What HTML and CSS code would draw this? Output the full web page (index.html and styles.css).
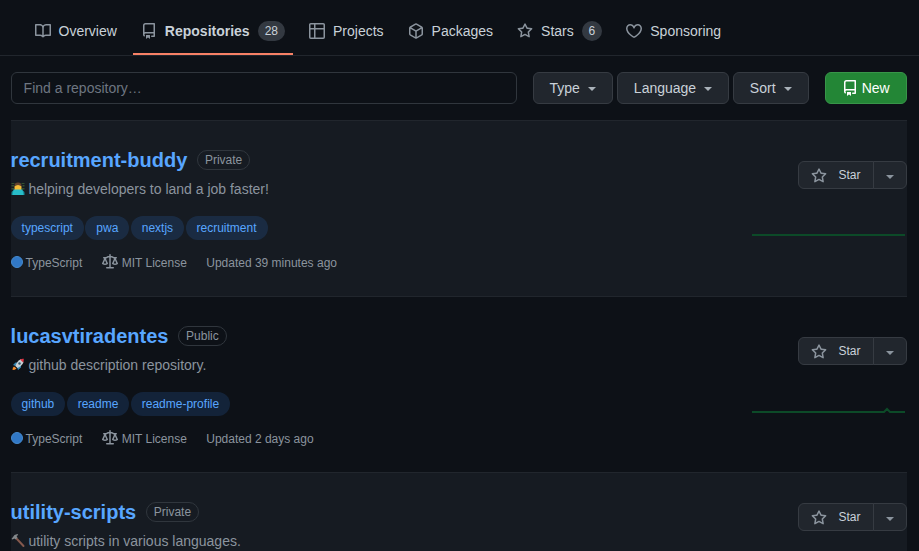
FILE: index.html
```html
<!DOCTYPE html>
<html lang="en">
<head>
<meta charset="utf-8">
<title>Repositories</title>
<link rel="stylesheet" href="styles.css">
</head>
<body>
<svg class="defs" aria-hidden="true">
  <symbol id="book" viewBox="0 0 16 16"><path fill-rule="evenodd" d="M0 1.75A.75.75 0 01.75 1h4.253c1.227 0 2.317.59 3 1.501A3.744 3.744 0 0111.006 1h4.245a.75.75 0 01.75.75v10.5a.75.75 0 01-.75.75h-4.507a2.25 2.25 0 00-1.591.659l-.622.621a.75.75 0 01-1.06 0l-.622-.621A2.25 2.25 0 005.258 13H.75a.75.75 0 01-.75-.75V1.75zm8.755 3a2.25 2.25 0 012.25-2.25H14.5v9h-3.757c-.71 0-1.4.201-1.992.572l.004-7.322zm-1.504 7.324l.004-5.073-.002-2.253A2.25 2.25 0 005.003 2.5H1.5v9h3.757a3.75 3.75 0 011.994.574z"/></symbol>
  <symbol id="repo" viewBox="0 0 16 16"><path fill-rule="evenodd" d="M2 2.5A2.5 2.5 0 014.5 0h8.75a.75.75 0 01.75.75v12.5a.75.75 0 01-.75.75h-2.5a.75.75 0 110-1.5h1.75v-2h-8a1 1 0 00-.714 1.7.75.75 0 01-1.072 1.05A2.495 2.495 0 012 11.5v-9zm10.5-1V9h-8c-.356 0-.694.074-1 .208V2.5a1 1 0 011-1h8zM5 12.25v3.25a.25.25 0 00.4.2l1.45-1.087a.25.25 0 01.3 0L8.6 15.7a.25.25 0 00.4-.2v-3.25a.25.25 0 00-.25-.25h-3.5a.25.25 0 00-.25.25z"/></symbol>
  <symbol id="table" viewBox="0 0 16 16"><path fill-rule="evenodd" d="M0 1.75C0 .784.784 0 1.75 0h12.5C15.216 0 16 .784 16 1.75v12.5A1.75 1.75 0 0114.25 16H1.75A1.75 1.75 0 010 14.25V1.75zM1.5 6.5v7.75c0 .138.112.25.25.25H5v-8H1.5zM5 5H1.5V1.75a.25.25 0 01.25-.25H5V5zm1.5 1.5v8h7.75a.25.25 0 00.25-.25V6.5h-8zm8-1.5h-8V1.5h7.75a.25.25 0 01.25.25V5z"/></symbol>
  <symbol id="package" viewBox="0 0 16 16"><path fill-rule="evenodd" d="M8.878.392a1.75 1.75 0 00-1.756 0l-5.25 3.045A1.75 1.75 0 001 4.951v6.098c0 .624.332 1.2.872 1.514l5.25 3.045a1.75 1.75 0 001.756 0l5.25-3.045c.54-.313.872-.89.872-1.514V4.951c0-.624-.332-1.2-.872-1.514L8.878.392zM7.875 1.69a.25.25 0 01.25 0l4.63 2.685L8 7.133 3.245 4.375l4.63-2.685zM2.5 5.677v5.372c0 .09.047.171.125.216l4.625 2.683V8.432L2.5 5.677zm6.25 8.271l4.625-2.683a.25.25 0 00.125-.216V5.677L8.75 8.432v5.516z"/></symbol>
  <symbol id="star" viewBox="0 0 16 16"><path fill-rule="evenodd" d="M8 .25a.75.75 0 01.673.418l1.882 3.815 4.21.612a.75.75 0 01.416 1.279l-3.046 2.97.719 4.192a.75.75 0 01-1.088.791L8 12.347l-3.766 1.98a.75.75 0 01-1.088-.79l.72-4.194L.818 6.374a.75.75 0 01.416-1.28l4.21-.611L7.327.668A.75.75 0 018 .25zm0 2.445L6.615 5.5a.75.75 0 01-.564.41l-3.097.45 2.24 2.184a.75.75 0 01.216.664l-.528 3.084 2.769-1.456a.75.75 0 01.698 0l2.77 1.456-.53-3.084a.75.75 0 01.216-.664l2.24-2.183-3.096-.45a.75.75 0 01-.564-.41L8 2.694z"/></symbol>
  <symbol id="heart" viewBox="0 0 16 16"><path fill-rule="evenodd" d="M4.25 2.5c-1.336 0-2.75 1.164-2.75 3 0 2.15 1.58 4.144 3.365 5.682A20.565 20.565 0 008 13.393a20.561 20.561 0 003.135-2.211C12.92 9.644 14.5 7.65 14.5 5.5c0-1.836-1.414-3-2.75-3-1.373 0-2.609.986-3.029 2.456a.75.75 0 01-1.442 0C6.859 3.486 5.623 2.5 4.25 2.5zM8 14.25l-.345.666-.002-.001-.006-.003-.018-.01a7.643 7.643 0 01-.31-.17 22.075 22.075 0 01-3.434-2.414C2.045 10.731 0 8.35 0 5.5 0 2.836 2.086 1 4.25 1 5.797 1 7.153 1.802 8 3.02 8.847 1.802 10.203 1 11.75 1 13.914 1 16 2.836 16 5.5c0 2.85-2.045 5.231-3.885 6.818a22.08 22.08 0 01-3.744 2.584l-.018.01-.006.003h-.002L8 14.25z"/></symbol>
  <symbol id="law" viewBox="0 0 16 16"><path fill-rule="evenodd" d="M8.75.75a.75.75 0 00-1.5 0V2h-.984c-.305 0-.604.08-.869.23l-1.288.737A.25.25 0 013.984 3H1.75a.75.75 0 000 1.5h.428L.066 9.192a.75.75 0 00.154.838l.53-.53-.53.53v.001l.002.002.002.002.006.006.016.015.045.04a3.514 3.514 0 00.686.45A4.492 4.492 0 003 11c.88 0 1.556-.22 2.023-.454a3.515 3.515 0 00.686-.45l.045-.04.016-.015.006-.006.002-.002.001-.002L5.25 9.5l.53.53a.75.75 0 00.154-.838L3.822 4.5h.162c.305 0 .604-.08.869-.23l1.289-.737a.25.25 0 01.124-.033h.984V13h-2.5a.75.75 0 000 1.5h6.5a.75.75 0 000-1.5h-2.5V3.5h.984a.25.25 0 01.124.033l1.29.736c.264.152.563.231.868.231h.162l-2.112 4.692a.75.75 0 00.154.838l.53-.53-.53.53v.001l.002.002.002.002.006.006.016.015.045.04a3.517 3.517 0 00.686.45A4.492 4.492 0 0013 11c.88 0 1.556-.22 2.023-.454a3.512 3.512 0 00.686-.45l.045-.04.01-.01.006-.005.006-.006.002-.002.001-.002-.529-.531.53.53a.75.75 0 00.154-.838L13.823 4.5h.427a.75.75 0 000-1.5h-2.234a.25.25 0 01-.124-.033l-1.29-.736A1.75 1.75 0 009.735 2H8.75V.75zM1.695 9.227c.285.135.718.273 1.305.273s1.02-.138 1.305-.273L3 6.327l-1.305 2.9zm10 0c.285.135.718.273 1.305.273s1.02-.138 1.305-.273L13 6.327l-1.305 2.9z"/></symbol>
</svg>

<nav class="tabs">
  <a class="tab"><svg class="icon"><use href="#book"/></svg>Overview</a>
  <a class="tab selected"><svg class="icon"><use href="#repo"/></svg>Repositories<span class="counter">28</span></a>
  <a class="tab"><svg class="icon"><use href="#table"/></svg>Projects</a>
  <a class="tab"><svg class="icon"><use href="#package"/></svg>Packages</a>
  <a class="tab"><svg class="icon"><use href="#star"/></svg>Stars<span class="counter">6</span></a>
  <a class="tab sponsoring"><svg class="icon"><use href="#heart"/></svg>Sponsoring</a>
</nav>

<main class="content">
  <div class="filters">
    <input class="search" type="text" placeholder="Find a repository…">
    <div class="menus">
      <button class="btn type">Type<span class="caret"></span></button>
      <button class="btn language">Language<span class="caret"></span></button>
      <button class="btn sort">Sort<span class="caret"></span></button>
    </div>
    <button class="btn new"><svg class="icon"><use href="#repo"/></svg>New</button>
  </div>

  <ul class="repos">
    <li class="repo private">
      <div class="info">
        <h3 class="name"><a>recruitment-buddy</a><span class="label">Private</span></h3>
        <p class="desc"><svg class="emoji" viewBox="0 0 14 14"><path fill="#34502f" d="M.5 1h3v1h-3zM.5 3h2.500v1.500H.5zM.5 6H3v1.500H.5zM10.500 1h3v1h-3zM11.500 3h2v1.500h-2zM11 6h2.500v1.500H11z"/><path fill="#65452d" d="M3.500 5V3.500Q3.500.5 7 .5t3.500 3V5z"/><path fill="#f5bd37" d="M3.500 4.500Q7 1.500 10.500 4.500V8h-7z"/><path fill="#168e9c" d="M.5 13v-2q0-2.500 3-2.500h7q3 0 3 2.500v2z"/><path fill="#28bcc9" d="M2.500 7.500h9l1 5.500h-11z"/></svg>helping developers to land a job faster!</p>
        <div class="topics"><a class="topic">typescript</a><a class="topic">pwa</a><a class="topic">nextjs</a><a class="topic">recruitment</a></div>
        <div class="meta"><span class="lang"><i class="dot"></i>TypeScript</span><span class="license"><svg class="icon"><use href="#law"/></svg>MIT License</span><span>Updated 39 minutes ago</span></div>
      </div>
      <div class="side">
        <div class="star-group"><button class="star"><svg class="icon"><use href="#star"/></svg>Star</button><button class="more"><span class="caret"></span></button></div>
        <svg class="spark" viewBox="0 0 155 30"><path d="M0 15H153"/></svg>
      </div>
    </li>
    <li class="repo">
      <div class="info">
        <h3 class="name"><a>lucasvtiradentes</a><span class="label">Public</span></h3>
        <p class="desc"><svg class="emoji" viewBox="0 0 14 14"><path fill="#f28a27" d="M1.500 12q0-3 1.500-3.500L5.500 10.500Q4 12 1.500 12z"/><path fill="#3488b5" d="M2 7l2.500-2.500h2L4.500 8zM6 9l4-2v2.500L7 12z"/><path fill="#c5d0d6" d="M4.300 8Q6 3 10 1l2.500 3q-1 3.500-6 6z"/><path fill="#df3543" d="M9 1.500Q11 .4 12.800.7q0 2-.6 3.800z"/><circle cx="8.500" cy="5.500" r="1.200" fill="#355568"/></svg>github description repository.</p>
        <div class="topics"><a class="topic">github</a><a class="topic">readme</a><a class="topic">readme-profile</a></div>
        <div class="meta"><span class="lang"><i class="dot"></i>TypeScript</span><span class="license"><svg class="icon"><use href="#law"/></svg>MIT License</span><span>Updated 2 days ago</span></div>
      </div>
      <div class="side">
        <div class="star-group"><button class="star"><svg class="icon"><use href="#star"/></svg>Star</button><button class="more"><span class="caret"></span></button></div>
        <svg class="spark" viewBox="0 0 155 30"><path d="M0 16H132L135 13L138 16H153"/></svg>
      </div>
    </li>
    <li class="repo private last">
      <div class="info">
        <h3 class="name"><a>utility-scripts</a><span class="label">Private</span></h3>
        <p class="desc"><svg class="emoji" viewBox="0 0 14 14"><path d="M5 4l7.500 8" stroke="#85594d" stroke-width="2" stroke-linecap="round"/><path fill="#84898c" d="M.5 5l3-4 3-1 .7 1-1.700 1 1 1.500-2 2-1-1-2 1z"/></svg>utility scripts in various languages.</p>
      </div>
      <div class="side">
        <div class="star-group"><button class="star"><svg class="icon"><use href="#star"/></svg>Star</button><button class="more"><span class="caret"></span></button></div>
      </div>
    </li>
  </ul>
</main>
</body>
</html>
```
FILE: styles.css
```css
* { box-sizing: border-box; }
body {
  margin: 0;
  height: 551px;
  overflow: hidden;
  background: #0d1117;
  color: #c9d1d9;
  font: 14px/21px "Liberation Sans", Arial, sans-serif;
}
.defs { display: none; }
.icon { width: 16px; height: 16px; flex: none; fill: #8b949e; }

.tabs {
  display: flex;
  gap: 8px;
  height: 56px;
  padding: 7px 0 0 26.5px;
  border-bottom: 1px solid #21262d;
}
.tab {
  display: flex;
  align-items: center;
  height: 48px;
  padding: 2px 8px 0;
  border-bottom: 2px solid transparent;
  white-space: nowrap;
}
.tab .icon { margin-right: 8px; }
.tab.sponsoring .icon { margin-right: 8.5px; }
.tab.selected { font-weight: 600; border-color: #f78166; }
.counter {
  min-width: 20px;
  margin-left: 8px;
  padding: 0 6px;
  border: 1px solid transparent;
  border-radius: 20px;
  background: rgba(110, 118, 129, 0.4);
  font-size: 12px;
  font-weight: 400;
  line-height: 18px;
  text-align: center;
}
.tab:not(.selected) .counter { width: 20px; padding: 0; }

.content { padding: 16px 12px 0 10.6px; }
.filters { display: flex; gap: 16px; height: 32px; }
.search {
  flex: 1;
  min-width: 0;
  padding: 0 12px;
  border: 1px solid #30363d;
  border-radius: 6px;
  background: #0d1117;
  color: #c9d1d9;
  font: inherit;
}
.search::placeholder { color: #6e7681; opacity: 1; }
.menus { display: flex; gap: 4px; }
button {
  display: flex;
  align-items: center;
  margin: 0;
  padding: 0;
  border: 1px solid #363b42;
  background: #21262d;
  color: #c9d1d9;
  font: inherit;
}
.btn { justify-content: center; height: 32px; border-radius: 6px; }
.type { width: 80px; }
.language { width: 112px; }
.sort { width: 76px; }
.type, .sort { padding-right: 0.6px; }
.new { width: 82px; gap: 3.4px; background: #238636; border-color: #389549; color: #fff; }
.new .icon { fill: #fff; }
.caret {
  margin: 2px 0 0 8px;
  border: 4px solid transparent;
  border-top-color: #a9b1b9;
  border-bottom: 0;
}

.repos { margin: 16px 0 0; padding: 0; list-style: none; }
.repo {
  display: flex;
  justify-content: space-between;
  height: 176px;
  border-top: 1px solid #21262d;
}
.private { background: #161b22; }
.info { padding-top: 24px; }
.name {
  display: flex;
  align-items: center;
  height: 30px;
  margin: 0;
  color: #58a6ff;
  font-size: 20px;
  line-height: 30px;
}
.label {
  margin-left: 9.6px;
  padding: 0 7px;
  border: 1px solid #30363d;
  border-radius: 20px;
  color: #8b949e;
  font-size: 12px;
  font-weight: 400;
  line-height: 18px;
}
.desc { display: flex; align-items: center; height: 21px; margin: 4px 0 0; color: #8b949e; }
.emoji { width: 14px; height: 14px; margin: -1px 3.8px 0 0; }
.topics { display: flex; gap: 1.4px; margin-top: 16px; }
.topic {
  padding: 0 11px;
  border-radius: 20px;
  background: rgba(56, 139, 253, 0.15);
  color: #58a6ff;
  font-size: 12px;
  line-height: 24px;
}
.meta {
  display: flex;
  align-items: center;
  gap: 19.4px;
  height: 18px;
  margin-top: 14px;
  color: #8b949e;
  font-size: 12px;
  line-height: 18px;
}
.lang, .license { display: flex; align-items: center; }
.dot {
  width: 12px;
  height: 12px;
  margin: -2px 3px 0 0;
  border: 1px solid #458ace;
  border-radius: 50%;
  background: #3178c6;
}
.license .icon { margin: -2px 4px 0 0; }

.side { display: flex; flex-direction: column; align-items: flex-end; padding-top: 40px; }
.last { height: 79px; overflow: hidden; }
.last .side { padding-top: 30px; }
.star-group { display: flex; height: 28px; }
.star-group button { height: 28px; font-size: 12px; }
.star { width: 76px; padding-left: 12px; border-radius: 6px 0 0 6px; }
.star .icon { margin: 2px 11.4px 0 0; }
.more { width: 34px; margin-left: -1px; justify-content: center; border-radius: 0 6px 6px 0; }
.more .caret { margin: 4px 0 0; border-top-color: #8b949e; }
.spark { width: 155px; height: 30px; margin-top: 31px; }
.spark path { fill: none; stroke: #0c4a28; stroke-width: 2; }
```
